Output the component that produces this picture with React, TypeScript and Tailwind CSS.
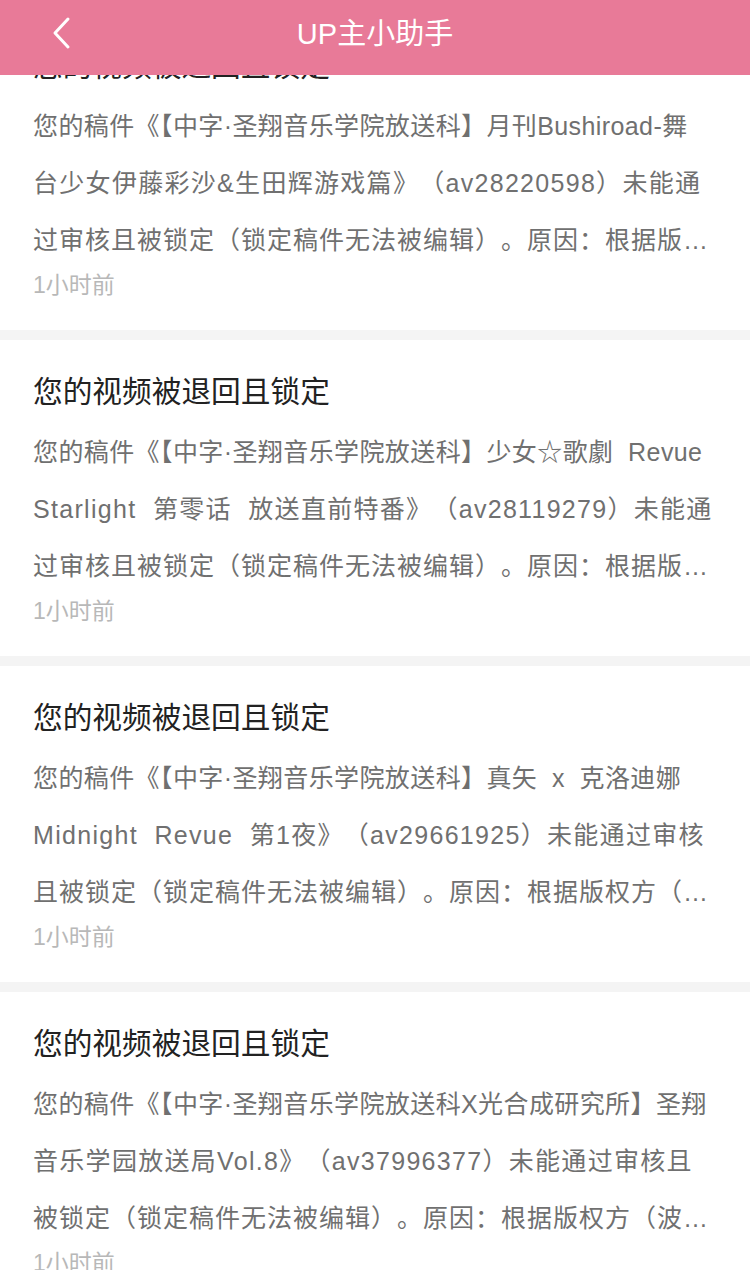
import React from "react";

type Item = { lines: string[] };

const items: Item[] = [
  {
    lines: [
      "您的稿件《【中字·圣翔音乐学院放送科】月刊Bushiroad-舞",
      "台少女伊藤彩沙&生田辉游戏篇》（av28220598）未能通",
      "过审核且被锁定（锁定稿件无法被编辑）。原因：根据版…",
    ],
  },
  {
    lines: [
      "您的稿件《【中字·圣翔音乐学院放送科】少女☆歌劇  Revue",
      "Starlight  第零话  放送直前特番》（av28119279）未能通",
      "过审核且被锁定（锁定稿件无法被编辑）。原因：根据版…",
    ],
  },
  {
    lines: [
      "您的稿件《【中字·圣翔音乐学院放送科】真矢  x  克洛迪娜",
      "Midnight  Revue  第1夜》（av29661925）未能通过审核",
      "且被锁定（锁定稿件无法被编辑）。原因：根据版权方（…",
    ],
  },
  {
    lines: [
      "您的稿件《【中字·圣翔音乐学院放送科X光合成研究所】圣翔",
      "音乐学园放送局Vol.8》（av37996377）未能通过审核且",
      "被锁定（锁定稿件无法被编辑）。原因：根据版权方（波…",
    ],
  },
];

const lineClasses = [
  "whitespace-pre overflow-hidden tracking-[0.4px]",
  "whitespace-pre overflow-hidden tracking-[1.3px] [text-spacing-trim:space-all]",
  "whitespace-pre overflow-hidden tracking-[1px] [text-spacing-trim:space-all]",
];

function Card({ item }: { item: Item }) {
  return (
    <div className="bg-white px-[33px] pt-[32px] pb-[29px]">
      <div className="text-[29.7px] leading-[40px] text-[#222222] whitespace-nowrap">
        您的视频被退回且锁定
      </div>
      <div className="mt-[12px] text-[25px] leading-[57px] text-[#707070]">
        {item.lines.map((l, i) => (
          <div key={i} className={lineClasses[i]}>
            {l}
          </div>
        ))}
      </div>
      <div className="text-[23px] leading-[32px] text-[#b8b8b8]">1小时前</div>
    </div>
  );
}

export default function App() {
  return (
    <div className="relative w-[750px] h-[1270px] overflow-hidden bg-[#f4f4f4] font-['Liberation_Sans','Noto_Sans_CJK_SC',sans-serif]">
      <div className="pt-[14px] flex flex-col gap-[10px]">
        {items.map((it, i) => (
          <Card key={i} item={it} />
        ))}
      </div>
      <div className="absolute top-0 left-0 right-0 h-[75px] bg-[#e87a98] flex items-center justify-center pb-[8px]">
        <svg
          className="absolute left-[48px] top-[14px]"
          width="30"
          height="38"
          viewBox="0 0 30 38"
          fill="none"
        >
          <polyline
            points="20,5 7,19 20,33"
            stroke="white"
            strokeWidth="3"
            strokeLinecap="round"
            strokeLinejoin="round"
          />
        </svg>
        <div className="text-white text-[29px] leading-[40px]">UP主小助手</div>
      </div>
    </div>
  );
}
